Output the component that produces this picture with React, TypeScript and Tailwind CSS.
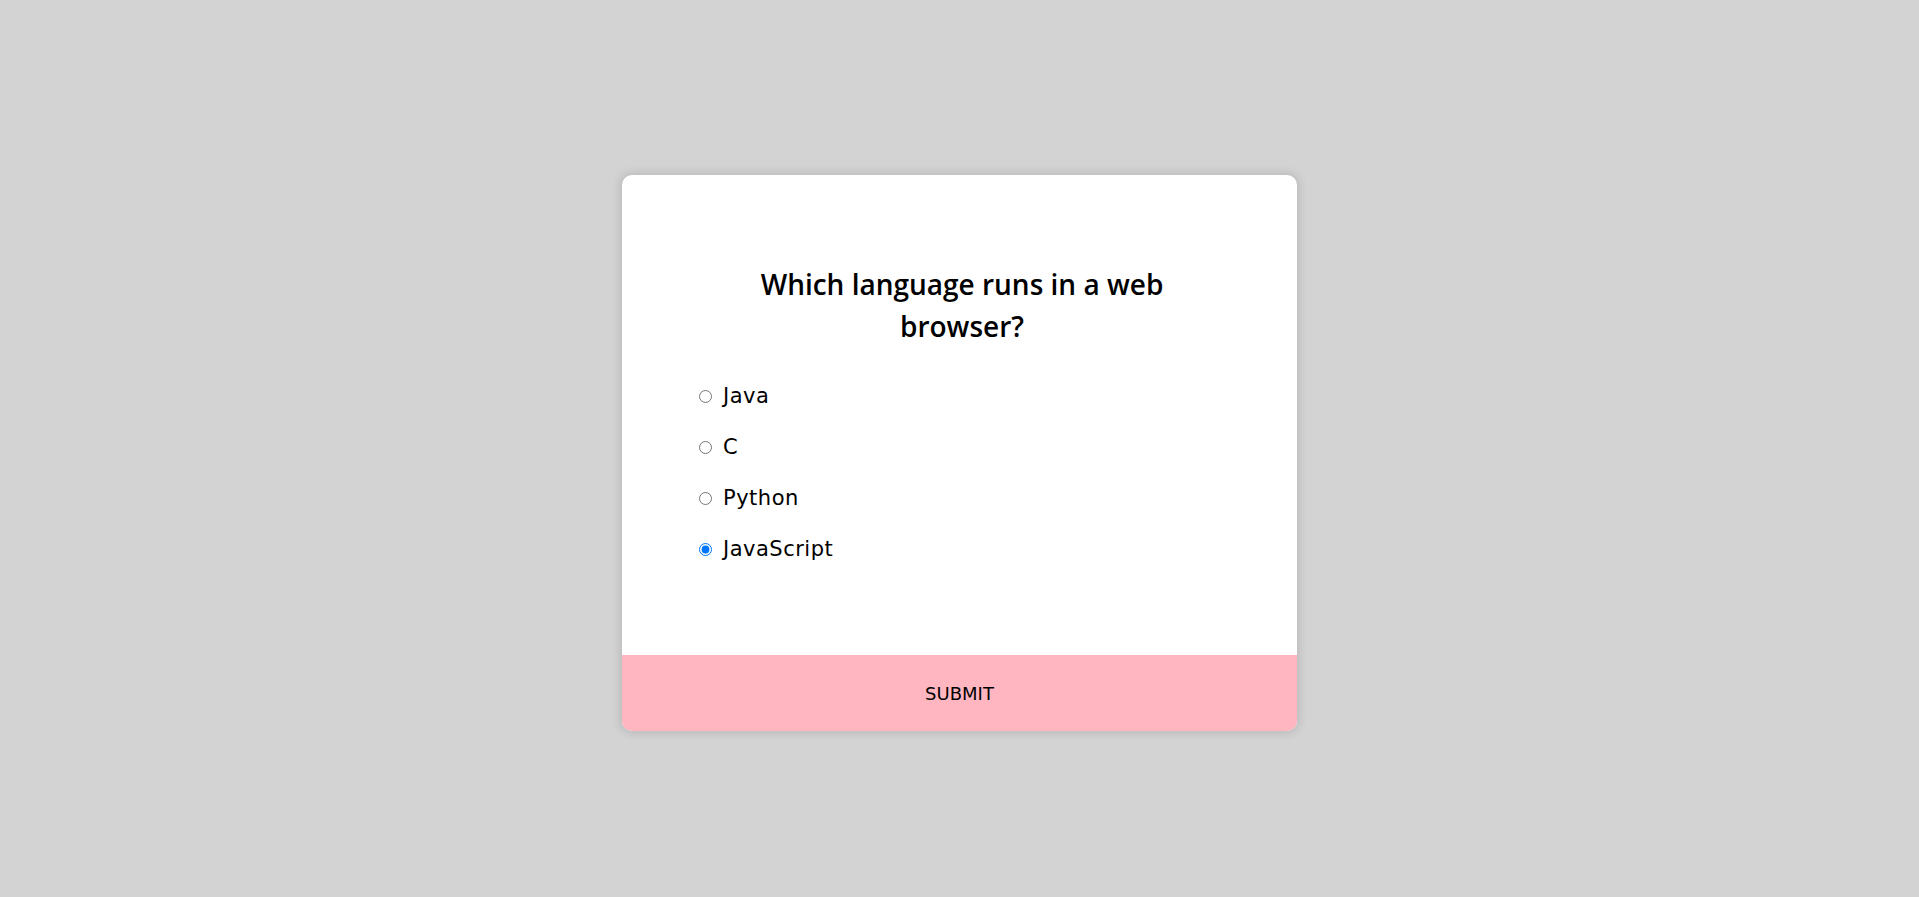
import React from "react";

const options = ["Java", "C", "Python", "JavaScript"];

export default function App() {
  return (
    <div
      className="min-h-screen w-full bg-[#d3d3d3] flex items-center justify-center pt-[9px]"
      style={{ fontFamily: "'DejaVu Sans', 'Open Sans', sans-serif" }}
    >
      <div className="w-[675px] bg-white rounded-[10px] shadow-[0_0_10px_2px_rgba(0,0,0,0.12)] overflow-hidden">
        <div className="pt-[88px] pb-[80px] pl-[77px] pr-[72px]">
          <h2
            className="mx-auto w-[480px] text-center text-[28px] leading-[42px] font-semibold text-black"
            style={{ fontFamily: "'Open Sans', 'DejaVu Sans', sans-serif" }}
          >
            Which language runs in a web browser?
          </h2>
          <ul className="mt-[24px]">
            {options.map((o) => (
              <li key={o} className="h-[51px] flex items-center">
                <input
                  type="radio"
                  name="answer"
                  defaultChecked={o === "JavaScript"}
                  className="m-0 w-[13px] h-[13px]"
                />
                <label className="ml-[11px] text-[21px] tracking-[0.5px] text-black">{o}</label>
              </li>
            ))}
          </ul>
        </div>
        <button className="block w-full h-[76px] bg-[#ffb6c1] text-[18px] text-black">
          SUBMIT
        </button>
      </div>
    </div>
  );
}
